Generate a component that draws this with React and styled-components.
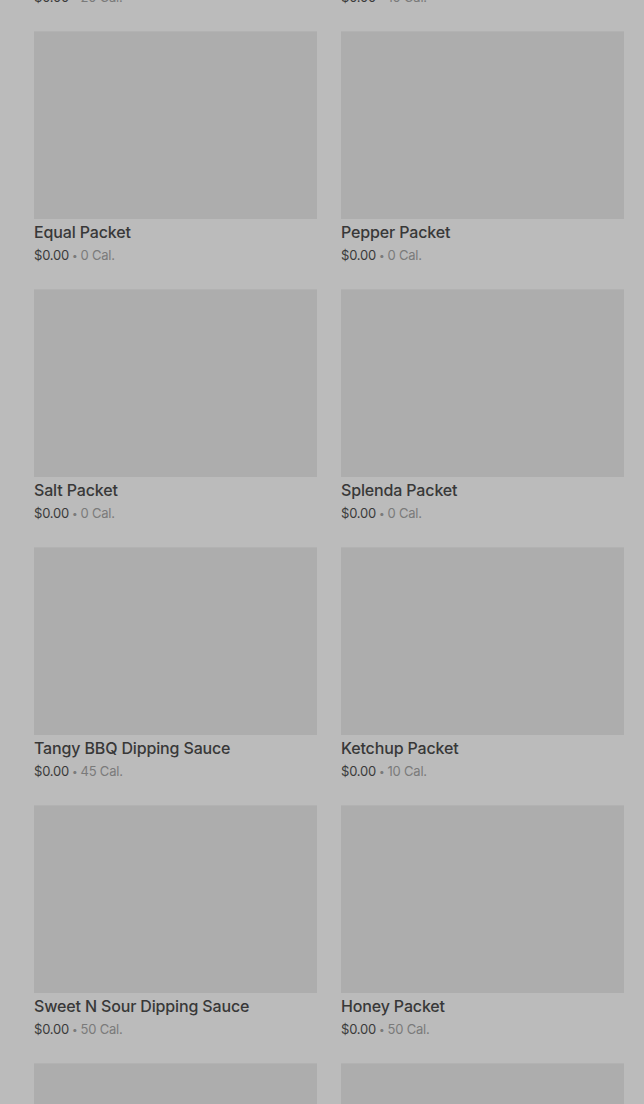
import React from "react";
import styled, { createGlobalStyle } from "styled-components";

const GlobalStyle = createGlobalStyle`
  html, body {
    margin: 0;
    padding: 0;
    background: #bbbbbb;
    overflow: hidden;
  }
  body {
    font-family: Inter, "Noto Sans", "Liberation Sans", sans-serif;
  }
`;

const Page = styled.div`
  width: 644px;
  height: 1104px;
  overflow: hidden;
  background: #bbbbbb;
`;

// the list is scrolled, so the first row sits mostly above the window
const Grid = styled.div`
  display: grid;
  grid-template-columns: 283px 283px;
  column-gap: 24px;
  row-gap: 24px;
  padding: 0 20px 0 34px;
  margin-top: -227px;
`;

const Card = styled.div`
  display: flex;
  flex-direction: column;
`;

const Thumb = styled.div`
  height: 188px;
  background: #adadad;
  border-top: 1px solid #b2b2b2;
  box-sizing: border-box;
`;

const Name = styled.div`
  margin-top: 1px;
  font-size: 16px;
  line-height: 24px;
  font-weight: 500;
  color: #383838;
  letter-spacing: -0.15px;
`;

const Meta = styled.div`
  display: flex;
  align-items: center;
  height: 20px;
  margin-top: 1px;
  font-size: 13px;
  line-height: 20px;
  color: #3a3a3a;
  letter-spacing: -0.2px;
`;

const Dot = styled.span`
  margin: 0 3px 1px;
  color: #7a7a7a;
  font-size: 10px;
  line-height: 1;
`;

const Cal = styled.span`
  color: #7a7a7a;
`;

const items = [
  { name: "Creamer", cal: 20 },
  { name: "Sugar Packet", cal: 10 },
  { name: "Equal Packet", cal: 0 },
  { name: "Pepper Packet", cal: 0 },
  { name: "Salt Packet", cal: 0 },
  { name: "Splenda Packet", cal: 0 },
  { name: "Tangy BBQ Dipping Sauce", cal: 45 },
  { name: "Ketchup Packet", cal: 10 },
  { name: "Sweet N Sour Dipping Sauce", cal: 50 },
  { name: "Honey Packet", cal: 50 },
  { name: "Hot Mustard Dipping Sauce", cal: 60 },
  { name: "Ranch Dipping Sauce", cal: 110 },
];

const Item = ({ name, cal }) => (
  <Card>
    <Thumb />
    <Name>{name}</Name>
    <Meta>
      $0.00<Dot>•</Dot>
      <Cal>{cal} Cal.</Cal>
    </Meta>
  </Card>
);

const App = () => (
  <Page>
    <GlobalStyle />
    <Grid>
      {items.map((item) => (
        <Item key={item.name} {...item} />
      ))}
    </Grid>
  </Page>
);

export default App;
